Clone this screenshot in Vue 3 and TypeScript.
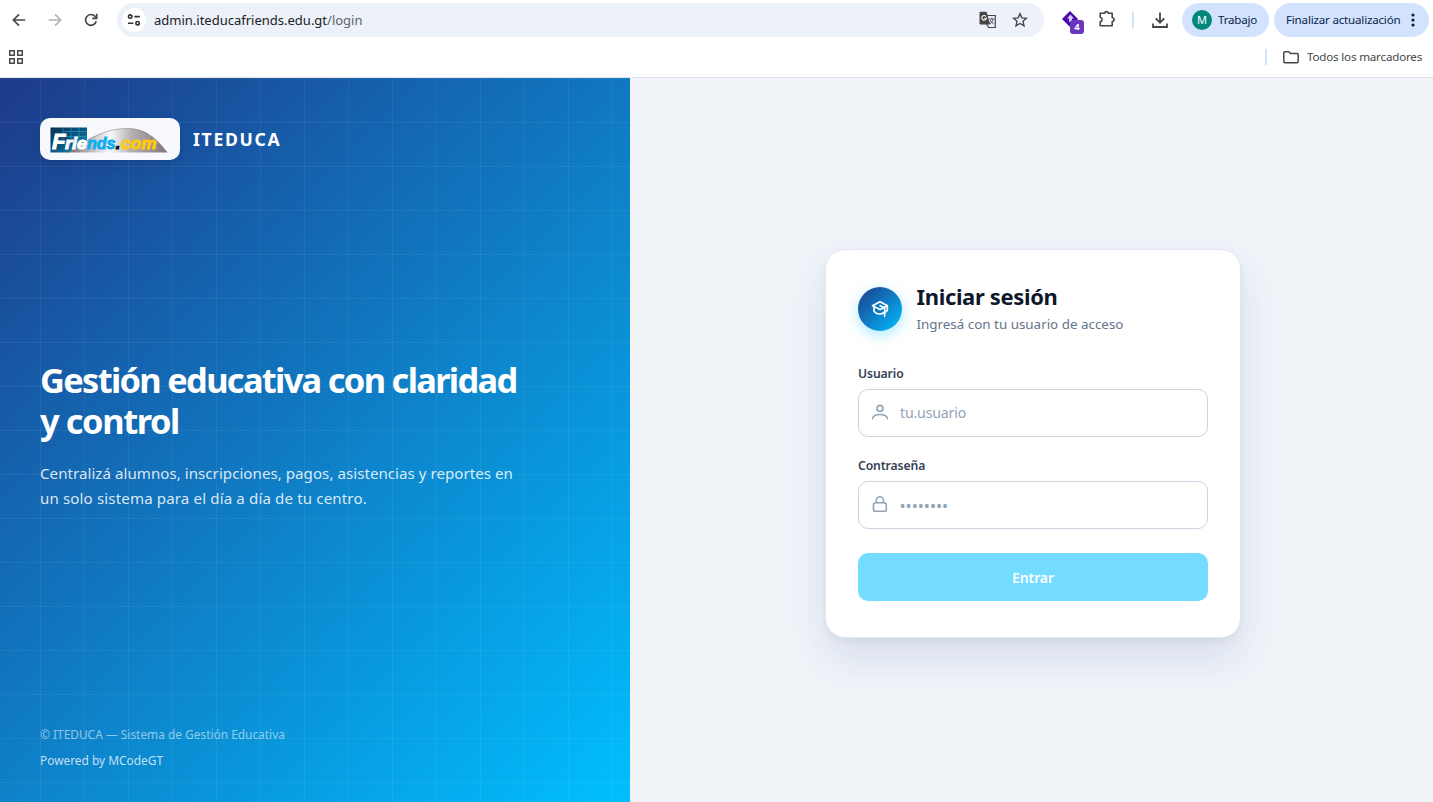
<script setup lang="ts">
import { ref } from 'vue'

const usuario = ref('')
const clave = ref('')
</script>

<template>
  <div class="window">
    <header class="chrome">
      <div class="toolbar">
        <svg class="nav-icon back" viewBox="0 0 16 16"><path d="M14.2 8H2.6M8 2.4 2.4 8 8 13.6" /></svg>
        <svg class="nav-icon forward" viewBox="0 0 16 16"><path d="M1.8 8h11.6M8 2.4 13.6 8 8 13.6" /></svg>
        <svg class="nav-icon reload" viewBox="0 0 16 16"><path d="M13.2 9.2A5.4 5.4 0 1 1 12 4.3L13.6 6" /><path d="M13.7 1.8v4.6H9.2" /></svg>
        <div class="address">
          <span class="site-info">
            <svg viewBox="0 0 14 14"><circle cx="3.2" cy="3.6" r="1.7" /><path d="M7.4 3.6h5.4M1 10.2h5.4" /><circle cx="10.6" cy="10.2" r="1.7" /></svg>
          </span>
          <span class="url">admin.iteducafriends.edu.gt<i>/login</i></span>
          <svg class="translate" viewBox="0 0 18 18">
            <path d="M7 4.5h9.3v12H9.6L7.5 13" fill="none" stroke="#474747" stroke-width="1.2" />
            <path d="M1.5.8h6l3.8 12.7H1.5A1 1 0 0 1 .5 12.500V1.800a1 1 0 0 1 1-1Z" fill="#474747" />
            <path d="M6.900 5.300a2.300 2.300 0 1 0 .5 2H5.300" fill="none" stroke="#fff" stroke-width="1.100" />
            <path d="M10.300 8h5M12.800 6.800V8M14.200 8c-.5 2.200-1.600 3.700-3.200 4.800M11.300 9.200c.8 1.700 1.900 2.900 3.500 3.800" fill="none" stroke="#474747" stroke-width=".9" />
          </svg>
          <svg class="star" viewBox="0 0 16 16"><path d="m8 1.700 1.850 4.150 4.550.45-3.400 3.050 1 4.450L8 11.500l-4 2.300 1-4.450L1.600 6.300l4.550-.45Z" /></svg>
        </div>
        <div class="extension">
          <svg viewBox="0 0 18 18"><path d="m9 1 8 8-8 8-8-8Z" fill="#4b08ad" /><path d="m9.500 4.500 3.500 4h-2V12H8V8.500H6Z" fill="#d9c8f5" /></svg>
          <span class="count">4</span>
        </div>
        <svg class="puzzle" viewBox="0 0 18 18"><path d="M2.200 3.300h4.600a1.700 1.700 0 0 1 3.400 0h4v4.400a1.900 1.900 0 0 1 0 3.800v4.200h-12v-3.800a2.400 2.400 0 0 0 0-4.700Z" /></svg>
        <span class="divider"></span>
        <svg class="download" viewBox="0 0 18 18"><path d="M9 1.500v10M4.700 7.400 9 11.700l4.300-4.300M2 12.500V16h14v-3.500" /></svg>
        <div class="pill profile"><span class="avatar">M</span><span class="pill-text">Trabajo</span></div>
        <div class="pill update"><span class="pill-text">Finalizar actualización</span><svg viewBox="0 0 4 14"><circle cx="2" cy="2" r="1.600" /><circle cx="2" cy="7" r="1.600" /><circle cx="2" cy="12" r="1.600" /></svg></div>
      </div>
      <div class="bookmarks">
        <svg class="apps" viewBox="0 0 14 14"><path d="M.75.75h4.500v4.500H.75ZM8.750.75h4.500v4.500h-4.500ZM.75 8.750h4.500v4.500H.75ZM8.750 8.750h4.500v4.500h-4.500Z" /></svg>
        <span class="divider"></span>
        <svg class="folder" viewBox="0 0 16 13"><path d="M.8 1.800a1 1 0 0 1 1-1h4.100l1.600 1.700h6.700a1 1 0 0 1 1 1v7.200a1 1 0 0 1-1 1H1.800a1 1 0 0 1-1-1Z" /></svg>
        <span class="all">Todos los marcadores</span>
      </div>
    </header>

    <main class="page">
      <section class="hero">
        <div class="brand">
          <div class="logo">
            <svg viewBox="0 0 120 28">
              <defs>
                <linearGradient id="tile" x1="0" y1="0" x2="1" y2="1"><stop offset="0" stop-color="#08304f" /><stop offset=".5" stop-color="#0b5681" /><stop offset="1" stop-color="#159bc4" /></linearGradient>
                <linearGradient id="hill" x1="0" y1="0" x2="1" y2="0"><stop offset="0" stop-color="#6e6a6a" /><stop offset=".27" stop-color="#c9c9ca" /><stop offset=".43" stop-color="#fafafa" /><stop offset=".64" stop-color="#b5b0b0" /><stop offset="1" stop-color="#7f7777" /></linearGradient>
              </defs>
              <path d="M17 26.500C35 14 54 2.500 78 2.500c18 0 28 9 39.500 24Z" fill="url(#hill)" />
              <path d="M.5 1.500H37V14.500L18 26.500H.5Z" fill="url(#tile)" />
              <path d="M13 2v11M21 2v11M29 2v12M13 5.500h24M13 10.500h24" stroke="#2fb9df" stroke-width=".8" opacity=".6" />
              <path d="M38 14C52 6 64 2.500 78 2.500c8 0 14 2 20 5.500" fill="none" stroke="#777" stroke-width=".5" />
              <text class="white" x="2" y="23.300" font-size="21.500" textLength="13.500" lengthAdjust="spacingAndGlyphs">F</text>
              <text class="white" x="15" y="23.300" font-size="16" textLength="22" lengthAdjust="spacingAndGlyphs">rie</text>
              <text class="blue" x="37" y="23.300" font-size="16" textLength="28.500" lengthAdjust="spacingAndGlyphs">nds</text>
              <text class="dark" x="65.500" y="23.300" font-size="18">.</text>
              <text class="gold" x="71" y="23.300" font-size="16" textLength="35.500" lengthAdjust="spacingAndGlyphs">com</text>
            </svg>
          </div>
          <span class="brand-name">ITEDUCA</span>
        </div>
        <div class="pitch">
          <h1>Gestión educativa con claridad<br /><span class="second">y control</span></h1>
          <p>Centralizá alumnos, inscripciones, pagos, asistencias y reportes en<br /><span class="closing">un solo sistema para el día a día de tu centro.</span></p>
        </div>
        <footer>
          <div class="copy">© ITEDUCA — Sistema de Gestión Educativa</div>
          <div class="powered">Powered by MCodeGT</div>
        </footer>
      </section>

      <section class="access">
        <form class="card" @submit.prevent>
          <div class="card-head">
            <span class="badge">
              <svg viewBox="0 0 20 20"><path d="M10 2.800 17.500 6.700 10 10.600 2.500 6.700Z" /><path d="M4 7.800v4.500c2.400 3.200 7.400 3.600 10.200 1" /><path d="M10 6.600 14.600 9v8.300" /><path d="M17.300 7v4.300c-.7 1.200-1.500 1.700-2.500 2" /></svg>
            </span>
            <div>
              <h2>Iniciar sesión</h2>
              <p>Ingresá con tu usuario de acceso</p>
            </div>
          </div>
          <label for="usuario">Usuario</label>
          <div class="field">
            <svg viewBox="0 0 18 18"><circle cx="9" cy="5.400" r="3" /><path d="M1.500 15.800c.6-3.100 3.300-4.300 7.500-4.300s6.900 1.200 7.500 4.300" /></svg>
            <input id="usuario" v-model="usuario" type="text" placeholder="tu.usuario" />
          </div>
          <label for="clave" class="pass-label">Contraseña</label>
          <div class="field">
            <svg viewBox="0 0 18 18"><rect x="2.500" y="7.800" width="12.800" height="8.500" rx="1.800" /><path d="M5.300 7.800V5.400a3.600 3.600 0 0 1 7.200 0v2.400" /></svg>
            <input id="clave" v-model="clave" class="pass" type="password" placeholder="••••••••" />
          </div>
          <button type="submit" disabled>Entrar</button>
        </form>
      </section>
    </main>
  </div>
</template>

<style>
body { overflow: hidden; background: #f0f4f9; }
</style>

<style scoped>
* { box-sizing: border-box; }
.window { width: 1433px; height: 802px; overflow: hidden; display: flex; flex-direction: column; font-family: "Noto Sans", "Open Sans", sans-serif; }
svg { display: block; flex: none; }
.chrome { height: 78px; flex: none; background: #fff; border-bottom: 1px solid #dfe3e8; }
.toolbar { height: 40px; display: flex; align-items: center; padding-right: 4px; }
.nav-icon { width: 16px; height: 16px; fill: none; stroke: #474747; stroke-width: 1.7; }
.back { margin-left: 11px; }
.forward { margin-left: 20px; stroke: #b2b2b2; }
.reload { margin-left: 20px; }
.address { margin-left: 18px; width: 927px; height: 34px; border-radius: 17px; background: #ecf1fa; display: flex; align-items: center; padding: 0 16px 0 5px; }
.site-info { width: 24px; height: 24px; border-radius: 50%; background: #fff; display: grid; place-items: center; }
.site-info svg { width: 14px; height: 14px; fill: none; stroke: #333; stroke-width: 1.6; }
.url { margin: 0 auto 0 8px; font-size: 13px; color: #202124; white-space: nowrap; }
.url i { font-style: normal; color: #5f6368; }
.translate { width: 18px; height: 18px; margin-right: 15px; }
.star { width: 16px; height: 16px; fill: none; stroke: #474747; stroke-width: 1.4; }
.extension { position: relative; margin-left: 17px; width: 24px; height: 24px; padding: 2px 0 0; }
.extension svg { width: 18px; height: 18px; }
.count { position: absolute; left: 9px; top: 12px; width: 14px; height: 14px; border-radius: 3px; background: #6a35c0; color: #fff; font-size: 9.5px; font-weight: 700; line-height: 14px; text-align: center; }
.puzzle { width: 18px; height: 18px; margin-left: 13px; margin-bottom: 2px; fill: none; stroke: #474747; stroke-width: 1.6; stroke-linejoin: round; }
.divider { width: 2px; height: 16px; background: #d3e3fd; }
.toolbar .divider { margin-left: 16px; }
.download { width: 18px; height: 18px; margin-left: 17px; fill: none; stroke: #474747; stroke-width: 1.8; }
.pill { height: 34px; border-radius: 17px; background: #d3e3fd; color: #0a1f4a; font-size: 11.6px; letter-spacing: -.2px; display: flex; align-items: center; white-space: nowrap; }
.pill-text { margin-bottom: 2px; }
.profile { width: 87px; margin-left: 13px; padding-left: 10px; gap: 6px; }
.avatar { width: 20px; height: 20px; border-radius: 50%; background: #00897b; color: #fff; font-size: 11px; line-height: 20px; text-align: center; }
.update { width: 155px; margin-left: auto; padding: 0 14px 0 12px; justify-content: space-between; }
.update svg { width: 4px; height: 14px; fill: #0a1f4a; }
.bookmarks { height: 34px; display: flex; align-items: center; padding: 0 11px 0 9px; }
.apps { width: 14px; height: 14px; fill: none; stroke: #474747; stroke-width: 1.5; margin-right: auto; }
.folder { width: 16px; height: 13px; margin: 0 8px 0 16px; fill: none; stroke: #474747; stroke-width: 1.5; }
.all { font-size: 11.6px; letter-spacing: -.18px; color: #474747; width: 115px; line-height: 16px; margin-bottom: 1px; white-space: nowrap; }

.page { flex: 1; display: flex; min-height: 0; }
.hero {
  width: 630px; flex: none; display: flex; flex-direction: column; padding: 40px 40px 33px; color: #fff;
  background:
    linear-gradient(rgba(255, 255, 255, .06) 1px, transparent 1px) 0 0 / 44px 44px,
    linear-gradient(90deg, rgba(255, 255, 255, .06) 1px, transparent 1px) -4px 0 / 44px 44px,
    linear-gradient(135deg, #1e3a8a 0%, #00bfff 100%);
}
.brand { display: flex; align-items: center; gap: 13px; height: 42px; }
.logo { width: 140px; height: 42px; border-radius: 10px; background: #f7f9fd; padding: 8px 10px; box-shadow: 0 4px 14px rgba(0, 0, 0, .12); }
.logo svg { width: 120px; height: 28px; }
.logo text { font-family: "Liberation Sans", Arial, sans-serif; font-weight: 700; font-style: italic; stroke-width: .9px; }
.white { fill: #fff; stroke: #fff; }
.blue { fill: #10aef0; stroke: #10aef0; }
.dark { fill: #111; stroke: #111; }
.gold { fill: #ffc90e; stroke: #ffc90e; }
.brand-name { font-size: 17.6px; font-weight: 700; letter-spacing: 1.7px; }
.pitch { margin-top: 199px; }
h1 { margin: 0; font-size: 34.4px; line-height: 41px; font-weight: 700; letter-spacing: -1.68px; white-space: nowrap; }
.second { letter-spacing: -1.4px; }
.pitch p { margin: 20px 0 0; font-size: 15.1px; line-height: 25px; letter-spacing: .04px; color: rgba(255, 255, 255, .85); white-space: nowrap; }
.closing { letter-spacing: .13px; }
footer { margin-top: auto; font-size: 11.9px; line-height: 18px; }
.copy { color: rgba(255, 255, 255, .55); }
.powered { margin-top: 8px; color: rgba(255, 255, 255, .75); }

.access { flex: 1; display: flex; align-items: center; justify-content: center; background: #f0f4f9; padding: 7px 0 0 3px; }
.card { width: 416px; height: 389px; border: 1px solid #e2e8f0; border-radius: 20px; background: #fff; padding: 32px; box-shadow: 0 4px 6px rgba(15, 23, 42, .04), 0 20px 40px rgba(30, 58, 138, .12); }
.card-head { display: flex; gap: 14.5px; height: 52px; }
.badge { width: 44px; height: 44px; margin-top: 5px; border-radius: 50%; background: linear-gradient(135deg, #1e3a8a, #00bfff); box-shadow: 0 4px 14px rgba(0, 191, 255, .35); display: grid; place-items: center; }
.badge svg { width: 20px; height: 20px; fill: none; stroke: #fff; stroke-width: 1.7; stroke-linejoin: round; stroke-linecap: round; }
h2 { margin: 0; font-size: 22px; line-height: 28px; color: #0f172a; font-weight: 700; letter-spacing: -.35px; white-space: nowrap; }
.card-head p { margin: 4px 0 0; font-size: 13.4px; line-height: 20px; color: #64748b; white-space: nowrap; }
label { display: block; width: max-content; margin-top: 30px; height: 20px; line-height: 20px; font-size: 12.2px; letter-spacing: -.1px; font-weight: 600; color: #334155; }
.pass-label { margin-top: 19px; }
.field { height: 48px; margin-top: 5px; border: 1px solid #cbd5e1; border-radius: 10px; display: flex; align-items: center; padding: 0 12px; gap: 11px; }
.field svg { width: 18px; height: 18px; fill: none; stroke: #94a3b8; stroke-width: 1.6; stroke-linecap: round; margin-bottom: 2px; }
input { flex: 1; min-width: 0; border: 0; outline: 0; padding: 0; margin: 0 0 2px; background: none; font: 14.2px "Noto Sans", sans-serif; letter-spacing: -.2px; }
input::placeholder { color: #94a3b8; opacity: 1; }
.pass { letter-spacing: 0; font-size: 16.2px; margin: 2px 0 0 -.5px; }
button { width: 100%; height: 48px; margin-top: 24px; padding: 0; border: 0; border-radius: 10px; background: #73dcff; color: #fff; font: 600 14px "Noto Sans", sans-serif; letter-spacing: -.1px; }
</style>
